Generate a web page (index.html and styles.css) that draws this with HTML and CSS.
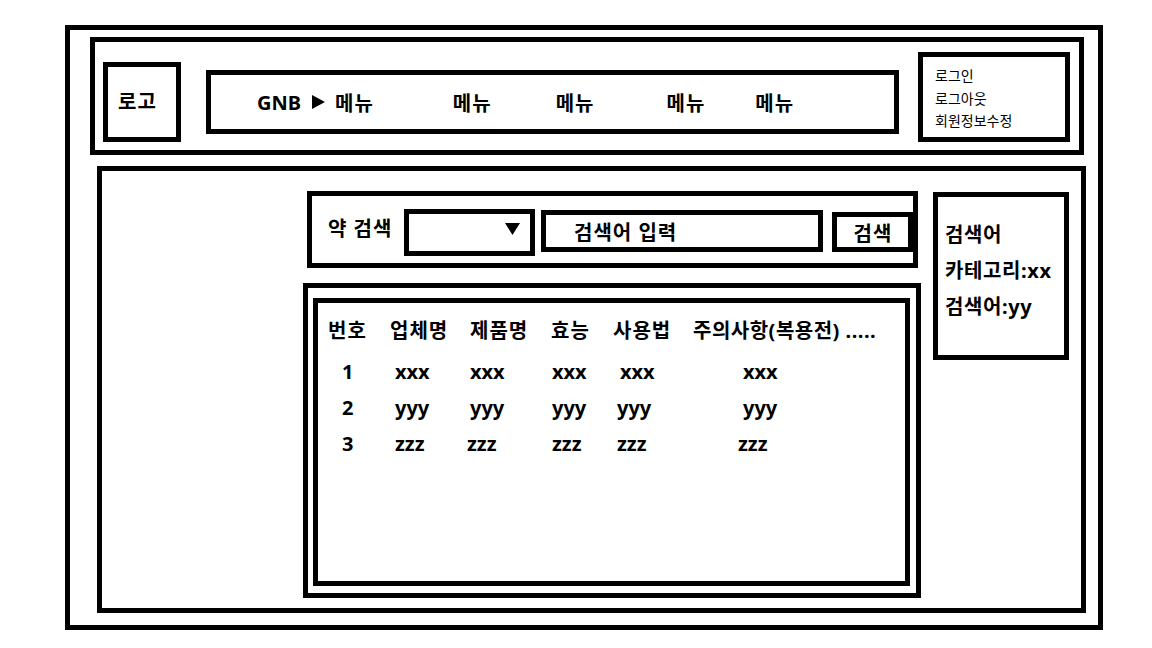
FILE: index.html
```html
<!DOCTYPE html>
<html lang="ko">
<head>
  <meta charset="UTF-8">
  <meta name="viewport" content="width=device-width, initial-scale=1.0">
  <title>약 검색</title>
  <link rel="stylesheet" href="styles.css">
</head>
<body>
  <div class="frame">
    <header class="top">
      <div class="logo">로고</div>
      <nav class="gnb">
        <span class="gnb-title">GNB</span>
        <svg class="gnb-arrow" width="13" height="14" viewBox="0 0 13 14"><polygon points="0,0 13,7 0,14"/></svg>
        <a class="menu">메뉴</a>
        <a class="menu">메뉴</a>
        <a class="menu">메뉴</a>
        <a class="menu">메뉴</a>
        <a class="menu">메뉴</a>
      </nav>
      <ul class="account">
        <li>로그인</li>
        <li>로그아웃</li>
        <li>회원정보수정</li>
      </ul>
    </header>

    <main class="content">
      <section class="main-col">
        <div class="search">
          <span class="search-label">약 검색</span>
          <div class="select">
            <svg width="15" height="12" viewBox="0 0 15 12"><polygon points="0,0 15,0 7.5,12"/></svg>
          </div>
          <div class="keyword">검색어 입력</div>
          <button class="search-btn">검색</button>
        </div>

        <div class="list-wrap">
          <div class="list">
            <div class="row head">
              <span>번호</span><span>업체명</span><span>제품명</span><span>효능</span><span>사용법</span><span class="note">주의사항(복용전) .....</span>
            </div>
            <div class="row">
              <span class="c1">1</span><span class="c2">xxx</span><span class="c3">xxx</span><span class="c4">xxx</span><span class="c5">xxx</span><span class="c6">xxx</span>
            </div>
            <div class="row">
              <span class="c1">2</span><span class="c2">yyy</span><span class="c3">yyy</span><span class="c4">yyy</span><span class="c5 shift">yyy</span><span class="c6">yyy</span>
            </div>
            <div class="row">
              <span class="c1">3</span><span class="c2">zzz</span><span class="c3 shift">zzz</span><span class="c4">zzz</span><span class="c5 shift">zzz</span><span class="c6 shift">zzz</span>
            </div>
          </div>
        </div>
      </section>

      <aside class="info">
        <p>검색어</p>
        <p>카테고리:xx</p>
        <p>검색어:yy</p>
      </aside>
    </main>
  </div>
</body>
</html>
```

FILE: styles.css
```css
* {
  box-sizing: border-box;
}

body {
  margin: 0;
  font-family: "Noto Sans", "Noto Sans CJK KR", sans-serif;
  background: #fff;
  color: #000;
}

.frame {
  margin: 25px 0 0 65px;
  width: 1038px;
  height: 605px;
  border: 5px solid #000;
  padding: 7px 12px 0 20px;
}

/* header */
.top {
  display: flex;
  align-items: flex-start;
  height: 118px;
  margin-right: 2px;
  padding-left: 8px;
  border: 5px solid #000;
}

.logo {
  width: 78px;
  height: 80px;
  margin-top: 20px;
  border: 5px solid #000;
  display: flex;
  align-items: center;
  padding: 0 0 4px 10px;
  font-size: 20px;
  font-weight: 700;
  letter-spacing: 1px;
}

.gnb {
  display: flex;
  align-items: center;
  width: 693px;
  height: 64px;
  margin: 28px 0 0 25px;
  padding-left: 46px;
  border: 5px solid #000;
  font-size: 20px;
  font-weight: 700;
}

.gnb-arrow {
  margin-left: 11px;
}

.menu {
  letter-spacing: 1px;
}

.menu:nth-of-type(1) { margin-left: 10px; }
.menu:nth-of-type(2) { margin-left: 79px; }
.menu:nth-of-type(3) { margin-left: 64px; }
.menu:nth-of-type(4) { margin-left: 72px; }
.menu:nth-of-type(5) { margin-left: 50px; }

.account {
  list-style: none;
  width: 152px;
  height: 90px;
  margin: 10px 0 0 19px;
  padding: 8px 0 0 12px;
  border: 5px solid #000;
  font-size: 14px;
  line-height: 22.5px;
}

/* content */
.content {
  display: flex;
  align-items: flex-start;
  height: 447px;
  margin: 11px 0 0 7px;
  border: 5px solid #000;
}

.main-col {
  width: 618px;
  margin: 20px 0 0 201px;
}

.search {
  display: flex;
  align-items: flex-start;
  width: 611px;
  height: 77px;
  margin-left: 4px;
  padding-left: 16px;
  border: 5px solid #000;
  font-size: 20px;
  font-weight: 700;
  letter-spacing: 1px;
}

.search-label {
  width: 76px;
  flex-shrink: 0;
  line-height: 28px;
  margin-top: 19px;
}

.select {
  display: flex;
  justify-content: flex-end;
  align-items: flex-start;
  width: 131px;
  height: 47px;
  margin-top: 13px;
  padding: 9px 10px 0 0;
  border: 5px solid #000;
  flex-shrink: 0;
}

.keyword {
  display: flex;
  align-items: center;
  width: 282px;
  height: 42px;
  margin: 14px 0 0 6px;
  padding-left: 28px;
  border: 5px solid #000;
  flex-shrink: 0;
}

.search-btn {
  width: 81px;
  height: 40px;
  margin: 16px 0 0 9px;
  padding: 0 0 0 1px;
  border: 5px solid #000;
  background: #fff;
  font: inherit;
  letter-spacing: 1px;
  color: #000;
  flex-shrink: 0;
}

.list-wrap {
  width: 618px;
  height: 315px;
  margin-top: 15px;
  padding: 10px 6px 7px 5px;
  border: 5px solid #000;
}

.list {
  height: 100%;
  padding: 10px 0 0 10px;
  border: 5px solid #000;
  font-size: 20px;
  font-weight: 700;
}

.row {
  display: grid;
  grid-template-columns: 62px 80px 81px 62px 80px auto;
  line-height: 36px;
  white-space: nowrap;
}

.row.head {
  margin-bottom: 5px;
  letter-spacing: 1px;
}

.row.head .note {
  letter-spacing: 0.5px;
}

.c1 { padding-left: 14px; }
.c2 { padding-left: 5px; }
.c3 { padding-left: 0; }
.c4 { padding-left: 1px; }
.c5 { padding-left: 7px; }
.c6 { padding-left: 50px; }

.c3.shift { margin-left: -3px; }
.c5.shift { padding-left: 4px; }
.c6.shift { padding-left: 45px; }

.info {
  width: 136px;
  height: 168px;
  margin: 21px 0 0 12px;
  padding: 20px 0 0 7px;
  border: 5px solid #000;
  font-size: 20px;
  font-weight: 700;
  line-height: 36px;
  letter-spacing: 0.6px;
  white-space: nowrap;
}

.info p {
  margin: 0;
}
```
